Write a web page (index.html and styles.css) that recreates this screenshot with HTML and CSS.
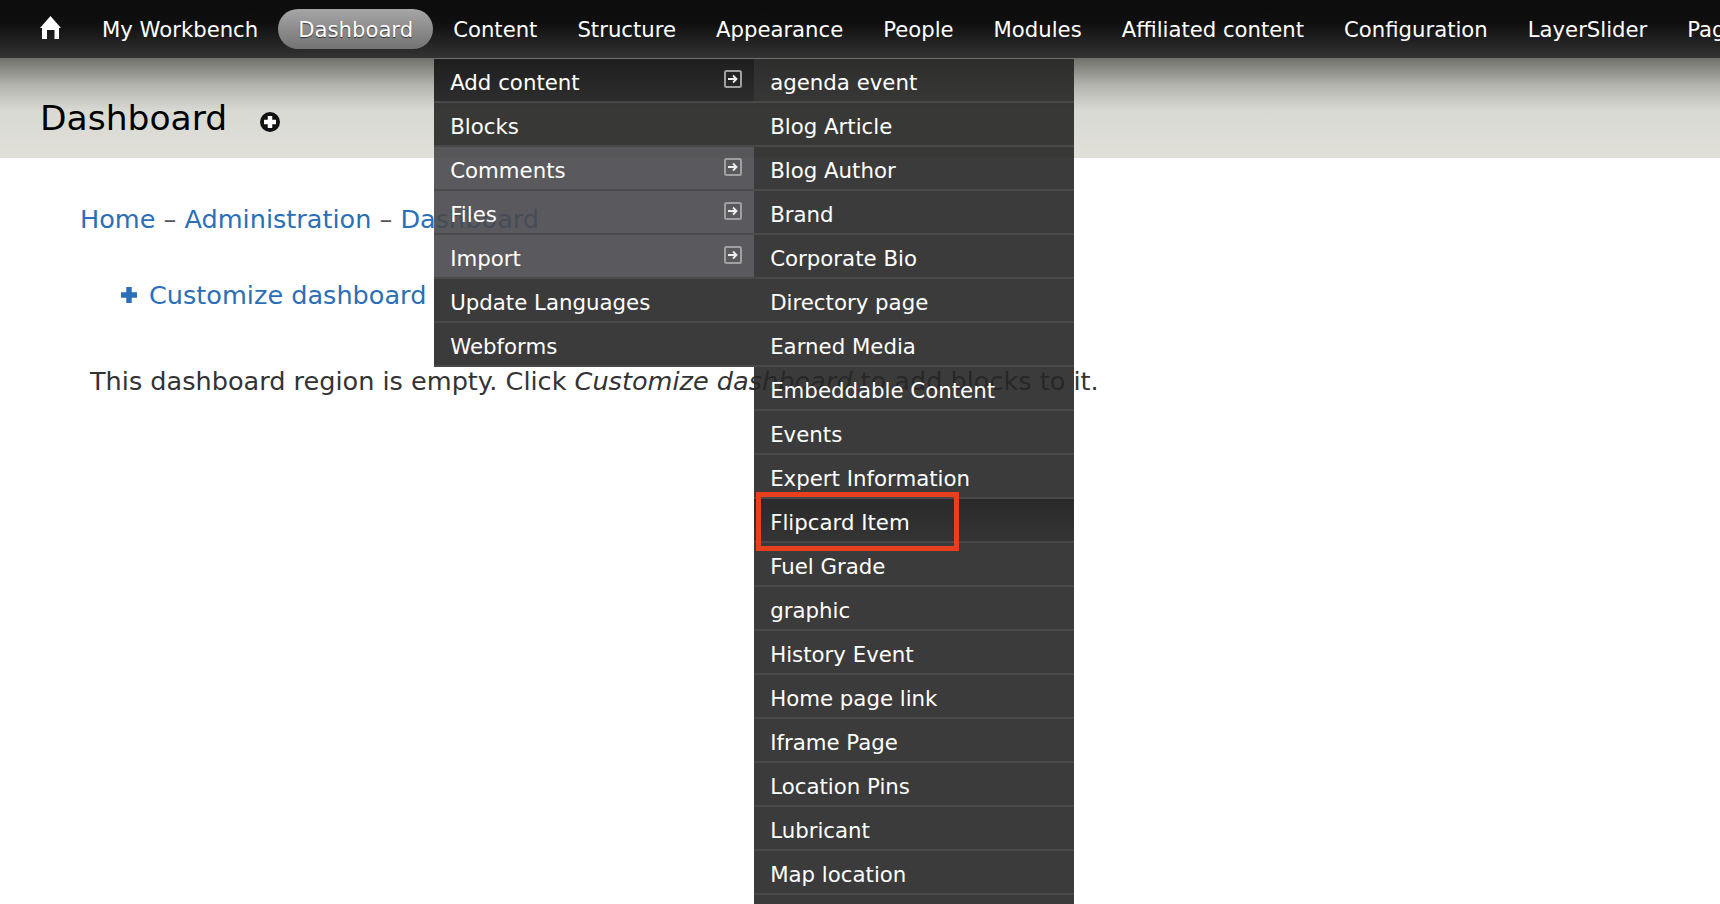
FILE: index.html
```html
<!DOCTYPE html>
<html lang="en">
<head>
  <meta charset="UTF-8">
  <title>Dashboard</title>
  <link rel="stylesheet" href="styles.css">
</head>
<body>

  <nav class="toolbar">
    <a class="home-link" href="#">
      <svg width="21" height="23" viewBox="0 0 21 23"><path fill="#fff" d="M10.500 0 21 12h-2v11h-4.500v-9H7v9H2V12H0z"/></svg>
    </a>
    <ul class="toolbar-menu">
      <li><a href="#">My Workbench</a></li>
      <li><a class="active" href="#">Dashboard</a></li>
      <li class="has-dropdown">
        <a href="#">Content</a>
        <ul class="dropdown">
          <li class="row trail">
            <a href="#">Add content</a>
            <svg class="arrow" width="18" height="18" viewBox="0 0 18 18"><rect x="1" y="1" width="16" height="16" rx="1.500" fill="none" stroke="#a0a0a0" stroke-width="2"/><path d="M4 9h8M9 5.500 12.500 9 9 12.500" fill="none" stroke="#eee" stroke-width="1.800"/></svg>
            <ul class="dropdown-sub">
              <li class="row"><a href="#">agenda event</a></li>
              <li class="row"><a href="#">Blog Article</a></li>
              <li class="row"><a href="#">Blog Author</a></li>
              <li class="row"><a href="#">Brand</a></li>
              <li class="row"><a href="#">Corporate Bio</a></li>
              <li class="row"><a href="#">Directory page</a></li>
              <li class="row"><a href="#">Earned Media</a></li>
              <li class="row"><a href="#">Embeddable Content</a></li>
              <li class="row"><a href="#">Events</a></li>
              <li class="row"><a href="#">Expert Information</a></li>
              <li class="row hovered"><a href="#">Flipcard Item</a><span class="callout"></span></li>
              <li class="row"><a href="#">Fuel Grade</a></li>
              <li class="row"><a href="#">graphic</a></li>
              <li class="row"><a href="#">History Event</a></li>
              <li class="row"><a href="#">Home page link</a></li>
              <li class="row"><a href="#">Iframe Page</a></li>
              <li class="row"><a href="#">Location Pins</a></li>
              <li class="row"><a href="#">Lubricant</a></li>
              <li class="row"><a href="#">Map location</a></li>
              <li class="row"></li>
            </ul>
          </li>
          <li class="row"><a href="#">Blocks</a></li>
          <li class="row lit">
            <a href="#">Comments</a>
            <svg class="arrow" width="18" height="18" viewBox="0 0 18 18"><rect x="1" y="1" width="16" height="16" rx="1.500" fill="none" stroke="#a0a0a0" stroke-width="2"/><path d="M4 9h8M9 5.500 12.500 9 9 12.500" fill="none" stroke="#eee" stroke-width="1.800"/></svg>
          </li>
          <li class="row lit">
            <a href="#">Files</a>
            <svg class="arrow" width="18" height="18" viewBox="0 0 18 18"><rect x="1" y="1" width="16" height="16" rx="1.500" fill="none" stroke="#a0a0a0" stroke-width="2"/><path d="M4 9h8M9 5.500 12.500 9 9 12.500" fill="none" stroke="#eee" stroke-width="1.800"/></svg>
          </li>
          <li class="row lit">
            <a href="#">Import</a>
            <svg class="arrow" width="18" height="18" viewBox="0 0 18 18"><rect x="1" y="1" width="16" height="16" rx="1.500" fill="none" stroke="#a0a0a0" stroke-width="2"/><path d="M4 9h8M9 5.500 12.500 9 9 12.500" fill="none" stroke="#eee" stroke-width="1.800"/></svg>
          </li>
          <li class="row"><a href="#">Update Languages</a></li>
          <li class="row"><a href="#">Webforms</a></li>
        </ul>
      </li>
      <li><a href="#">Structure</a></li>
      <li><a href="#">Appearance</a></li>
      <li><a href="#">People</a></li>
      <li><a href="#">Modules</a></li>
      <li><a href="#">Affiliated content</a></li>
      <li><a href="#">Configuration</a></li>
      <li><a href="#">LayerSlider</a></li>
      <li><a href="#">Pages</a></li>
    </ul>
  </nav>

  <header class="page-head">
    <h1>Dashboard</h1>
    <svg class="add-shortcut" width="22" height="22" viewBox="0 0 22 22"><circle cx="11" cy="11" r="10" fill="#111"/><path d="M11 5v12M5 11h12" stroke="#fff" stroke-width="4.500"/></svg>
  </header>

  <main class="content">
    <div class="breadcrumb">
      <a href="#">Home</a> <span>–</span> <a href="#">Administration</a> <span>–</span> <a href="#">Dashboard</a>
    </div>
    <div class="actions">
      <svg width="18" height="18" viewBox="0 0 18 18"><path d="M9 1v16M1 9h16" stroke="#2b6fb7" stroke-width="5.500"/></svg>
      <a href="#">Customize dashboard</a>
    </div>
    <p class="empty-text">This dashboard region is empty. Click <em>Customize dashboard</em> to add blocks to it.</p>
  </main>

</body>
</html>
```

FILE: styles.css
```css
html, body {
  height: 904px;
  overflow: hidden;
}
body {
  margin: 0;
  font-family: "DejaVu Sans", Verdana, sans-serif;
  background: #fff;
  color: #333;
}
a {
  color: #2b6fb7;
  text-decoration: none;
}
ul {
  list-style: none;
  margin: 0;
  padding: 0;
}

/* toolbar */
.toolbar {
  display: flex;
  align-items: center;
  height: 58px;
  padding-left: 40px;
  background: linear-gradient(#0c0c0c, #0f0f0f 40%, #333 100%);
  font-size: 21.200px;
}
.home-link {
  display: flex;
  width: 42px;
  flex-shrink: 0;
  margin-top: -3px;
}
.toolbar-menu {
  display: flex;
  flex-shrink: 0;
}
.toolbar-menu > li {
  position: relative;
}
.toolbar-menu > li > a {
  display: block;
  height: 40px;
  line-height: 41px;
  padding: 0 20px;
  color: #fff;
  white-space: nowrap;
}
.toolbar-menu > li > a.active {
  background: linear-gradient(#a6a6a6, #737373);
  border-radius: 20px;
  text-shadow: 0 1px 1px #333;
}

/* dropdown */
.dropdown {
  position: absolute;
  top: 50px;
  left: 1px;
  width: 320px;
  font-size: 21.300px;
}
.dropdown-sub {
  position: absolute;
  top: 0;
  left: 100%;
  width: 320px;
}
.row {
  position: relative;
  display: flex;
  align-items: center;
  justify-content: space-between;
  box-sizing: border-box;
  height: 44px;
  padding: 4px 12px 0 16px;
  background: rgba(38, 38, 38, 0.9);
  border-bottom: 2px solid rgba(74, 74, 74, 0.95);
}
.row a {
  color: #fff;
  white-space: nowrap;
}
.row.lit {
  background: rgba(72, 72, 76, 0.9);
}
.row.trail {
  background: linear-gradient(#1e1e1e, #2d2d2d);
}
.row.hovered {
  background: linear-gradient(#2a2a2a, #343434);
}
.row .arrow {
  margin-top: -6px;
}
.callout {
  position: absolute;
  z-index: 1;
  top: -7px;
  left: 2px;
  box-sizing: border-box;
  width: 203px;
  height: 59px;
  border: 5px solid #e8401f;
}

/* page head */
.page-head {
  display: flex;
  align-items: center;
  height: 100px;
  padding: 20px 0 0 40px;
  box-sizing: border-box;
  background: linear-gradient(#6f6f6b, #b5b5b0 28%, #d9d9d4 52%, #e0e0d8 100%);
}
.page-head h1 {
  margin: 0;
  font-size: 34.500px;
  font-weight: normal;
  color: #000;
}
.add-shortcut {
  margin: 8px 0 0 32px;
}

/* content */
.content {
  font-size: 25.550px;
}
.breadcrumb {
  padding: 45px 0 0 80px;
  line-height: 32px;
}
.breadcrumb span {
  color: #555;
}
.actions {
  display: flex;
  align-items: center;
  gap: 11px;
  padding: 44px 0 0 120px;
  line-height: 32px;
}
.empty-text {
  margin: 54px 0 0 90px;
  line-height: 32px;
}
```
